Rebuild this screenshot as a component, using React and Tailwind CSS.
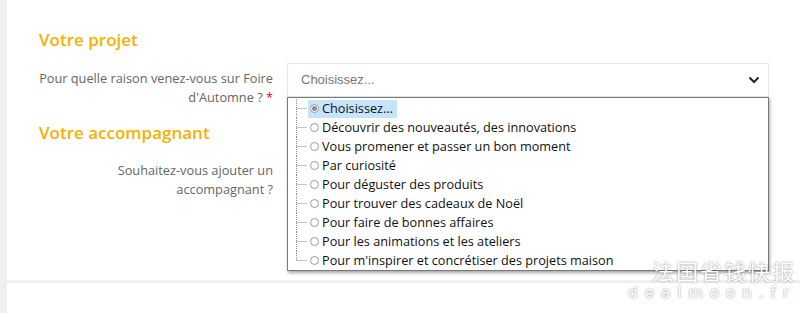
import React from "react";

const options = [
  "Choisissez...",
  "Découvrir des nouveautés, des innovations",
  "Vous promener et passer un bon moment",
  "Par curiosité",
  "Pour déguster des produits",
  "Pour trouver des cadeaux de Noël",
  "Pour faire de bonnes affaires",
  "Pour les animations et les ateliers",
  "Pour m'inspirer et concrétiser des projets maison",
];

const TreeLine = ({ last }) => (
  <svg width="12" height="19" className="shrink-0">
    <line x1="0.5" y1="0" x2="0.5" y2={last ? 9.5 : 19} stroke="#8a8a8a" strokeDasharray="1 1" />
    <line x1="0.5" y1="9.5" x2="11" y2="9.5" stroke="#8a8a8a" strokeDasharray="1 1" />
  </svg>
);

const Radio = ({ checked }) => (
  <span className="w-[9px] h-[9px] rounded-full border border-[#9a9a9a] bg-white flex items-center justify-center shrink-0">
    {checked && <span className="w-[5px] h-[5px] rounded-full bg-[#8a8a8a]"></span>}
  </span>
);

const App = () => {
  return (
    <div className="relative w-[800px] h-[313px] flex bg-white overflow-hidden" style={{ fontFamily: "'Open Sans', sans-serif" }}>
      <div className="w-[7px] h-full bg-[#efefef] shrink-0"></div>

      <div className="flex-1 flex flex-col">
        <div className="h-[280px] pl-[32px] pt-[27px]">
          <h2 className="text-[17px] leading-[26px] font-semibold text-[#f8b000]">Votre projet</h2>

          <div className="flex mt-[10px]">
            <div className="w-[242px] -ml-[8px] text-right text-[12.75px] leading-[19px] text-[#666] pt-[6px]">
              Pour quelle raison venez-vous sur Foire d'Automne ? <span className="text-[#e3001b]">*</span>
            </div>
            <div className="ml-[14px] w-[482px] h-[34px] border border-[#e5e5e5] flex items-center justify-between pl-[13px] pr-[8px]">
              <span className="text-[13px] text-[#777]" style={{ fontFamily: "'Liberation Sans', Arial, sans-serif" }}>Choisissez...</span>
              <svg width="12" height="8" viewBox="0 0 12 8">
                <path d="M1.5 1.5 L6 6 L10.5 1.5" fill="none" stroke="#222" strokeWidth="2" />
              </svg>
            </div>
          </div>

          <h2 className="mt-[13px] text-[17px] leading-[26px] font-semibold text-[#f8b000]">Votre accompagnant</h2>

          <div className="flex mt-[15px]">
            <div className="w-[234px] text-right text-[12.75px] leading-[19px] text-[#666]">
              Souhaitez-vous ajouter un
              <br />
              accompagnant ?
            </div>
          </div>
        </div>
        <div className="h-[3px] bg-[#f0f0f0]"></div>
      </div>

      <div className="absolute left-[287px] top-[97px] w-[482px] h-[174px] bg-white border border-[#7a7a7a] shadow-[1px_2px_3px_rgba(0,0,0,0.35)] pl-[8px] pt-[1px]">
        {options.map((opt, i) => (
          <div key={i} className="flex items-center h-[19px]">
            <TreeLine last={i === options.length - 1} />
            <div className={"flex items-center gap-[3px] h-[18px] pl-[2px] pr-[4px] " + (i === 0 ? "bg-[#c6e4fb]" : "")}>
              <Radio checked={i === 0} />
              <span className="text-[12.7px] text-[#111] whitespace-nowrap">{opt}</span>
            </div>
          </div>
        ))}
      </div>

      <div className="absolute right-[4px] top-[256px] flex flex-col items-end text-white" style={{ textShadow: "0 0 2px rgba(0,0,0,0.5)" }}>
        <span className="text-[22px] leading-[28px] tracking-[2px]" style={{ fontFamily: "'Noto Sans CJK SC', sans-serif" }}>法国省钱快报</span>
        <span className="text-[15px] leading-[18px] tracking-[7px]" style={{ fontFamily: "'DejaVu Sans', sans-serif" }}>dealmoon.fr</span>
      </div>
    </div>
  );
};

export default App;
